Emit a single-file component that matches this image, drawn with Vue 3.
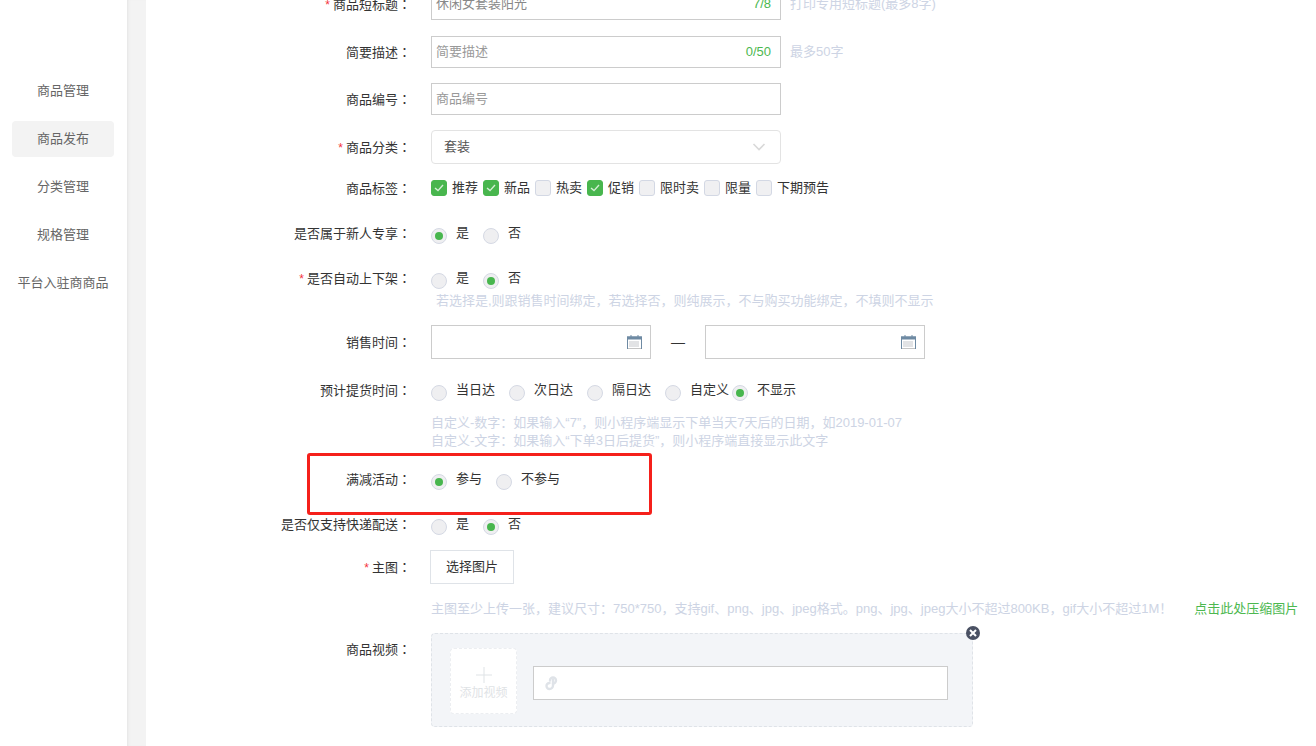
<template>
  <div class="page">
    <aside class="sidebar">
      <a
        v-for="item in navItems"
        :key="item"
        class="nav-item"
        :class="{ active: item === '商品发布' }"
      >{{ item }}</a>
    </aside>
    <div class="gutter"></div>

    <main class="form">
      <div class="row row-input">
        <div class="label"><i class="star">*</i>商品短标题<span class="colon">：</span></div>
        <div class="input filled"><span>休闲女套装阳光</span><em class="count">7/8</em></div>
        <span class="hint side-hint">打印专用短标题(最多8字)</span>
      </div>
      <div class="row row-input gap-16">
        <div class="label">简要描述<span class="colon">：</span></div>
        <div class="input"><span>简要描述</span><em class="count">0/50</em></div>
        <span class="hint side-hint">最多50字</span>
      </div>
      <div class="row row-input gap-15">
        <div class="label">商品编号<span class="colon">：</span></div>
        <div class="input"><span>商品编号</span></div>
      </div>
      <div class="row row-select gap-15">
        <div class="label"><i class="star">*</i>商品分类<span class="colon">：</span></div>
        <div class="select">
          <span>套装</span>
          <svg width="14" height="8" viewBox="0 0 14 8" fill="none" stroke="#d9d9d9" stroke-width="1.6">
            <path d="M1.5 1l5.5 5.5L12.5 1" />
          </svg>
        </div>
      </div>
      <div class="row row-tags">
        <div class="label">商品标签<span class="colon">：</span></div>
        <label v-for="tag in tags" :key="tag.name" class="check">
          <span class="box" :class="{ on: tag.on }">
            <svg v-if="tag.on" width="10" height="8" viewBox="0 0 10 8" fill="none" stroke="#d5eed6" stroke-width="1.4">
              <path d="M1 4l3 2.6L9 1" />
            </svg>
          </span>
          {{ tag.name }}
        </label>
      </div>

      <div class="row row-radio gap-new">
        <div class="label">是否属于新人专享<span class="colon">：</span></div>
        <label class="radio"><span class="dot on"></span>是</label>
        <label class="radio"><span class="dot"></span>否</label>
      </div>
      <div class="row row-radio gap-auto">
        <div class="label"><i class="star">*</i>是否自动上下架<span class="colon">：</span></div>
        <label class="radio"><span class="dot"></span>是</label>
        <label class="radio"><span class="dot on"></span>否</label>
      </div>
      <div class="hint auto-hint">若选择是,则跟销售时间绑定，若选择否，则纯展示，不与购买功能绑定，不填则不显示</div>

      <div class="row row-date">
        <div class="label">销售时间<span class="colon">：</span></div>
        <div class="date">
          <svg class="cal" width="15" height="14" viewBox="0 0 15 14">
            <rect x="0.5" y="2" width="14" height="11.5" fill="#fff" stroke="#6e8aa3" />
            <rect x="0" y="1.5" width="15" height="3" fill="#6e8aa3" />
            <path d="M4 0v3M11 0v3" stroke="#6e8aa3" />
            <path d="M2.5 7h10M2.5 9h10M2.5 11h10" stroke="#8a8f96" stroke-dasharray="1 1" />
            <path d="M1 13.5h13" stroke="#c4c4c4" />
          </svg>
        </div>
        <span class="dash">—</span>
        <div class="date">
          <svg class="cal" width="15" height="14" viewBox="0 0 15 14">
            <rect x="0.5" y="2" width="14" height="11.5" fill="#fff" stroke="#6e8aa3" />
            <rect x="0" y="1.5" width="15" height="3" fill="#6e8aa3" />
            <path d="M4 0v3M11 0v3" stroke="#6e8aa3" />
            <path d="M2.5 7h10M2.5 9h10M2.5 11h10" stroke="#8a8f96" stroke-dasharray="1 1" />
            <path d="M1 13.5h13" stroke="#c4c4c4" />
          </svg>
        </div>
      </div>

      <div class="row row-radio gap-ship">
        <div class="label">预计提货时间<span class="colon">：</span></div>
        <label class="radio wide"><span class="dot"></span>当日达</label>
        <label class="radio wide"><span class="dot"></span>次日达</label>
        <label class="radio wide"><span class="dot"></span>隔日达</label>
        <label class="radio tight"><span class="dot"></span>自定义</label>
        <label class="radio"><span class="dot on"></span>不显示</label>
      </div>
      <div class="hint ship-hint">
        <p>自定义-数字：如果输入“7”，则小程序端显示下单当天7天后的日期，如2019-01-07</p>
        <p>自定义-文字：如果输入“下单3日后提货”，则小程序端直接显示此文字</p>
      </div>

      <div class="row row-radio gap-promo promo">
        <div class="label">满减活动<span class="colon">：</span></div>
        <label class="radio"><span class="dot on"></span>参与</label>
        <label class="radio"><span class="dot"></span>不参与</label>
        <div class="red-box"></div>
      </div>
      <div class="row row-radio gap-express">
        <div class="label">是否仅支持快递配送<span class="colon">：</span></div>
        <label class="radio"><span class="dot"></span>是</label>
        <label class="radio"><span class="dot on"></span>否</label>
      </div>

      <div class="row row-main">
        <div class="label"><i class="star">*</i>主图<span class="colon">：</span></div>
        <button class="pick">选择图片</button>
      </div>
      <div class="hint main-hint">
        主图至少上传一张，建议尺寸：750*750，支持gif、png、jpg、jpeg格式。png、jpg、jpeg大小不超过800KB，gif大小不超过1M！<a class="compress">点击此处压缩图片</a>
      </div>

      <div class="row row-video">
        <div class="label">商品视频<span class="colon">：</span></div>
        <div class="video-box">
          <div class="add-video">
            <svg width="16" height="16" viewBox="0 0 16 16" stroke="#dfe3e6" stroke-width="1">
              <path d="M8 0v16M0 8h16" />
            </svg>
            <span>添加视频</span>
          </div>
          <div class="link-input">
            <svg width="15" height="15" viewBox="0 0 15 15" fill="none" stroke="#dfe3e8" stroke-width="2.4" stroke-linecap="round">
              <path d="M6 4.5a3 3 0 0 1 3-3 3 3 0 0 1 3 3 3 3 0 0 1-3 3" />
              <path d="M9 4v5.5a3.5 3.5 0 0 1-3.5 3.500 3 3 0 0 1-3-3 3 3 0 0 1 3-3" />
            </svg>
          </div>
          <span class="close">
            <svg width="8" height="8" viewBox="0 0 8 8" stroke="#fff" stroke-width="2">
              <path d="M1 1l6 6M7 1L1 7" />
            </svg>
          </span>
        </div>
      </div>
    </main>
  </div>
</template>

<script setup>
const navItems = ['商品管理', '商品发布', '分类管理', '规格管理', '平台入驻商商品']

const tags = [
  { name: '推荐', on: true },
  { name: '新品', on: true },
  { name: '热卖', on: false },
  { name: '促销', on: true },
  { name: '限时卖', on: false },
  { name: '限量', on: false },
  { name: '下期预告', on: false },
]
</script>

<style>
html,
body {
  margin: 0;
  background: #fff;
  overflow: hidden;
}
</style>

<style scoped>
.page {
  display: flex;
  width: 1316px;
  height: 746px;
  overflow: hidden;
  font-family: "Liberation Sans", "Noto Sans CJK SC", sans-serif;
  font-size: 13px;
  line-height: 16px;
  color: #333;
}

.sidebar {
  flex: none;
  box-sizing: border-box;
  width: 127px;
  padding: 73px 13px 0 12px;
  display: flex;
  flex-direction: column;
  gap: 12px;
  background: #fff;
}
.nav-item {
  height: 36px;
  line-height: 36px;
  text-align: center;
  border-radius: 4px;
  color: #666;
  white-space: nowrap;
}
.nav-item.active {
  background: #f3f3f3;
}
.gutter {
  flex: none;
  width: 19px;
  background: #f3f3f3;
  box-shadow: inset 3px 0 3px -2px #e4e4e4;
}

.form {
  flex: 1;
  min-width: 0;
  margin-top: -12px;
}
.row {
  display: flex;
  position: relative;
}
.label {
  flex: none;
  width: 265px;
  margin-right: 20px;
  text-align: right;
  white-space: nowrap;
}
.colon {
  font-family: "Noto Sans CJK TC", sans-serif;
}
.star {
  margin-right: 3px;
  color: #f4333c;
  font-style: normal;
  font-size: 12px;
}

.row-input {
  align-items: center;
  height: 32px;
}
.gap-16 {
  margin-top: 16px;
}
.gap-15 {
  margin-top: 15px;
}
.input {
  box-sizing: border-box;
  width: 350px;
  height: 32px;
  padding: 0 9px 0 4px;
  margin-right: 9px;
  display: flex;
  align-items: center;
  justify-content: space-between;
  border: 1px solid #ccc;
  color: #999;
}
.input.filled {
  color: #888;
}
.count {
  font-style: normal;
  color: #4cb84f;
}
.hint {
  color: #cdd4e4;
  white-space: nowrap;
}

.row-select {
  align-items: center;
  height: 34px;
}
.select {
  box-sizing: border-box;
  width: 350px;
  height: 34px;
  padding: 0 14px 0 12px;
  display: flex;
  align-items: center;
  justify-content: space-between;
  border: 1px solid #e3e3e3;
  border-radius: 4px;
  color: #555;
}

.row-tags {
  align-items: center;
  height: 16px;
  margin-top: 16px;
}
.check {
  display: flex;
  align-items: center;
  gap: 5px;
  margin-right: 5px;
}
.box {
  box-sizing: border-box;
  width: 16px;
  height: 16px;
  display: flex;
  align-items: center;
  justify-content: center;
  border: 1px solid #d3d8e4;
  border-radius: 3px;
  background: #f0f0f2;
}
.box.on {
  border-color: #48b64e;
  background: #48b64e;
}

.row-radio {
  align-items: flex-start;
  height: 19px;
}
.radio {
  display: flex;
  margin-right: 14px;
}
.radio.tight {
  margin-right: 3px;
}
.dot {
  position: relative;
  flex: none;
  box-sizing: border-box;
  width: 16px;
  height: 16px;
  margin: 3px 9px 0 0;
  border: 1px solid #d5d9e4;
  border-radius: 50%;
  background: #efeff1;
}
.dot.on::after {
  content: "";
  position: absolute;
  top: 3px;
  left: 3px;
  width: 8px;
  height: 8px;
  border-radius: 50%;
  background: #48b64e;
}
.gap-new {
  margin-top: 29px;
}
.gap-auto {
  margin-top: 26px;
}
.auto-hint {
  margin: 4px 0 0 290px;
}

.row-date {
  align-items: center;
  height: 34px;
  margin-top: 16px;
}
.date {
  box-sizing: border-box;
  width: 220px;
  height: 34px;
  padding-right: 8px;
  display: flex;
  align-items: center;
  justify-content: flex-end;
  border: 1px solid #ccc;
}
.dash {
  width: 54px;
  text-align: center;
  font-size: 14px;
}

.gap-ship {
  margin-top: 23px;
}
.ship-hint {
  margin: 13px 0 0 285px;
  line-height: 18px;
}
.ship-hint p {
  margin: 0;
}

.gap-promo {
  margin-top: 21px;
}
.red-box {
  position: absolute;
  top: -18px;
  left: 161px;
  box-sizing: border-box;
  width: 345px;
  height: 62px;
  border: 3px solid #f5201b;
  border-radius: 3px;
}
.gap-express {
  margin-top: 26px;
}

.row-main {
  align-items: center;
  height: 34px;
  margin-top: 15px;
}
.row-main .label {
  margin-right: 19px;
}
.pick {
  box-sizing: border-box;
  width: 84px;
  height: 34px;
  padding: 0;
  border: 1px solid #dfe3e8;
  background: #fff;
  color: #333;
  font: inherit;
}
.main-hint {
  margin: 17px 0 0 285px;
}
.compress {
  margin-left: 22px;
  color: #4cb84f;
}

.row-video {
  margin-top: 16px;
}
.row-video .label {
  margin-top: 8px;
}
.video-box {
  position: relative;
  box-sizing: border-box;
  width: 542px;
  height: 94px;
  padding: 14px 24px 0 18px;
  display: flex;
  gap: 16px;
  border: 1px dashed #dfe3e8;
  border-radius: 4px;
  background: #f3f5f8;
}
.add-video {
  box-sizing: border-box;
  width: 67px;
  height: 66px;
  padding-top: 18px;
  display: flex;
  flex-direction: column;
  align-items: center;
  gap: 2px;
  border: 1px dashed #eceef1;
  border-radius: 4px;
  background: #fff;
  color: #dfe3e6;
  font-size: 12px;
  white-space: nowrap;
}
.link-input {
  box-sizing: border-box;
  flex: 1;
  height: 34px;
  margin-top: 18px;
  padding-left: 10px;
  display: flex;
  align-items: center;
  border: 1px solid #ccc;
  background: #fff;
}
.close {
  position: absolute;
  top: -8px;
  right: -8px;
  width: 14px;
  height: 14px;
  display: flex;
  align-items: center;
  justify-content: center;
  border-radius: 50%;
  background: #4a5163;
}
</style>
